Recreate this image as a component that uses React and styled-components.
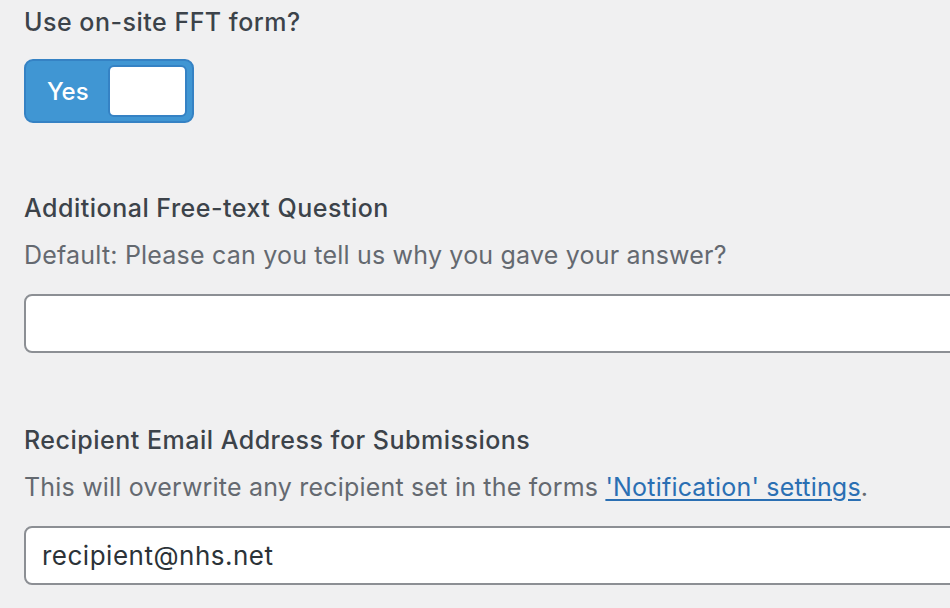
import React, { useState } from 'react'
import styled, { createGlobalStyle } from 'styled-components'

const GlobalStyle = createGlobalStyle`
  html, body {
    margin: 0;
    padding: 0;
    background: #f0f0f1;
  }
  body {
    font-family: Inter, "Noto Sans", "Liberation Sans", sans-serif;
    color: #3c434a;
    overflow: hidden;
  }
`;

const Page = styled.div`
  width: 950px;
  height: 608px;
  padding: 7px 0 0 24px;
  box-sizing: border-box;
  display: flex;
  flex-direction: column;
  overflow: hidden;
`;

const Field = styled.div`
  display: flex;
  flex-direction: column;
  margin-bottom: ${p => p.$gap || 0}px;
`;

const Label = styled.div`
  font-size: 25px;
  font-weight: 500;
  letter-spacing: 0.5px;
  line-height: 30px;
  color: #3c434a;
`;

const Description = styled.p`
  margin: 17px 0 0;
  font-size: 25px;
  letter-spacing: 0.2px;
  line-height: 30px;
  color: #646970;
  a {
    color: #2a6fb3;
    text-decoration: underline;
    text-underline-offset: 3px;
  }
`;

const Toggle = styled.button`
  margin-top: 22px;
  width: 170px;
  height: 64px;
  box-sizing: border-box;
  display: flex;
  align-items: center;
  justify-content: space-between;
  padding: 5px 5px 5px 21px;
  border: 2px solid #3582c4;
  border-radius: 9px;
  background: ${p => (p.$on ? '#4096d3' : '#dcdcde')};
  cursor: pointer;
  font-family: inherit;
`;

const ToggleText = styled.span`
  color: #fff;
  font-size: 24px;
  font-weight: 500;
`;

const Knob = styled.span`
  width: 79px;
  height: 52px;
  box-sizing: border-box;
  border: 2px solid #3582c4;
  border-radius: 6px;
  background: #fff;
`;

const TextInput = styled.input`
  margin-top: 24px;
  width: 960px;
  height: 59px;
  box-sizing: border-box;
  border: 2px solid #8c8f94;
  border-radius: 8px;
  background: #fff;
  padding: 0 16px;
  font-family: inherit;
  font-size: 26px;
  letter-spacing: 0.5px;
  color: #2c3338;
  outline: none;
`;

export default function App() {
  const [useForm, setUseForm] = useState(true)
  const [question, setQuestion] = useState('')
  const [email, setEmail] = useState('recipient@nhs.net')

  return (
    <Page>
      <GlobalStyle />
      <Field $gap={70}>
        <Label>Use on-site FFT form?</Label>
        <Toggle $on={useForm} onClick={() => setUseForm(!useForm)}>
          <ToggleText>{useForm ? 'Yes' : 'No'}</ToggleText>
          <Knob />
        </Toggle>
      </Field>
      <Field $gap={72}>
        <Label>Additional Free-text Question</Label>
        <Description>Default: Please can you tell us why you gave your answer?</Description>
        <TextInput value={question} onChange={e => setQuestion(e.target.value)} />
      </Field>
      <Field>
        <Label>Recipient Email Address for Submissions</Label>
        <Description>
          This will overwrite any recipient set in the forms <a href="#">'Notification' settings</a>.
        </Description>
        <TextInput value={email} onChange={e => setEmail(e.target.value)} />
      </Field>
    </Page>
  )
}
